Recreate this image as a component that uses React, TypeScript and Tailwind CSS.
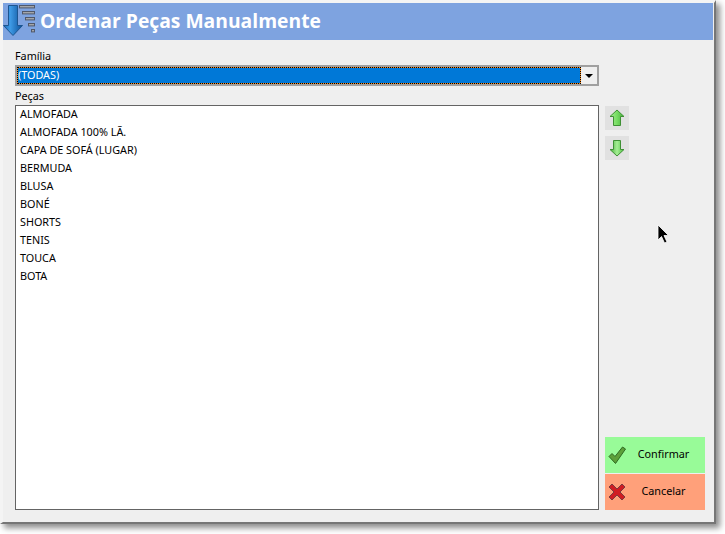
import React from "react";

const items = ["ALMOFADA", "ALMOFADA 100% LÃ.", "CAPA DE SOFÁ (LUGAR)", "BERMUDA", "BLUSA", "BONÉ", "SHORTS", "TENIS", "TOUCA", "BOTA"];

function TitleIcon() {
  return (
    <svg width="36" height="37" viewBox="0 0 36 37" className="shrink-0">
      <defs>
        <linearGradient id="tb" x1="0" x2="1" y1="0" y2="0">
          <stop offset="0" stopColor="#1766b8" />
          <stop offset="0.35" stopColor="#3f9be6" />
          <stop offset="1" stopColor="#0b4f98" />
        </linearGradient>
      </defs>
      <path d="M5.5 2.5H14.5V22.5H19.5L10 32.5 0.5 22.5H5.5Z" fill="url(#tb)" stroke="#1d5590" strokeWidth="1" />
      {[[16.5, 2.5, 15], [19.5, 8.5, 12], [22.5, 14.5, 9], [25.5, 20.5, 6], [28.5, 26.5, 3]].map(([x, y, w]) => (
        <rect key={y} x={x} y={y} width={w} height="2.4" fill="#a3a6aa" stroke="#50586a" strokeWidth="1" />
      ))}
    </svg>
  );
}

function Arrow({ down }: { down?: boolean }) {
  return (
    <svg width="16" height="18" viewBox="0 0 16 18" className={down ? "rotate-180" : ""}>
      <defs>
        <linearGradient id={down ? "ad" : "au"} x1="0" x2="1" y1="0" y2="0">
          <stop offset="0" stopColor={down ? "#4fc242" : "#a4ee90"} />
          <stop offset="0.5" stopColor={down ? "#a5ee94" : "#76dc62"} />
          <stop offset="1" stopColor="#45ae3a" />
        </linearGradient>
      </defs>
      <path d="M8 1 15 7.5H11.5V16.5H4.5V7.5H1Z" fill={`url(#${down ? "ad" : "au"})`} stroke="#3f9035" strokeWidth="1" />
    </svg>
  );
}

export default function App() {
  return (
    <div className="w-[725px] h-[534px] bg-white overflow-hidden font-['Noto_Sans',sans-serif] text-[10.8px] leading-[14px] text-black">
      <div className="w-[716px] h-[524px] bg-[#efefef] border-r-2 border-b-2 border-[#767676] border-l-[3px] border-l-[#f4f4f4] border-t-[3px] border-t-[#f4f4f4] shadow-[4px_4px_6px_rgba(0,0,0,0.45)] flex flex-col">
        <div className="h-[37px] mr-[1px] bg-[#7ea3e0] flex items-center gap-[1px] shrink-0">
          <TitleIcon />
          <span className="font-['Open_Sans',sans-serif] text-[19.3px] font-bold text-white leading-none pb-[1px]">Ordenar Peças Manualmente</span>
        </div>
        <div className="flex flex-1 pl-3 pb-[12px] gap-[6px]">
          <div className="w-[584px] flex flex-col">
            <div className="h-[25px] flex items-end pb-[2px] pt-[9px]">Família</div>
            <div className="h-[21px] flex border-2 border-[#a0a0a0] bg-white shrink-0">
              <div className="flex-1 bg-[#ff8c1a]">
                <div className="h-full bg-[#0078d7] bg-clip-padding text-white flex items-center pb-[1px] border border-dotted border-black">(TODAS)</div>
              </div>
              <div className="w-4 bg-[#efefef] flex items-center justify-center">
                <div className="w-0 h-0 border-l-[4px] border-r-[4px] border-t-[4px] border-l-transparent border-r-transparent border-t-black" />
              </div>
            </div>
            <div className="h-[19px] flex items-end pb-[2px]">Peças</div>
            <div className="flex-1 bg-white border border-[#646464] pl-1">
              {items.map((t) => (
                <div key={t} className="h-[18px] pb-[2px] flex items-center">{t}</div>
              ))}
            </div>
          </div>
          <div className="w-[100px] flex flex-col pt-[66px]">
            <button className="w-6 h-6 bg-[#e1e1e1] flex items-center justify-center"><Arrow /></button>
            <button className="w-6 h-6 mt-[6px] bg-[#e1e1e1] flex items-center justify-center"><Arrow down /></button>
            <div className="flex-1" />
            <button className="h-9 bg-[#98fb98] flex items-center relative">
              <svg width="18" height="18" viewBox="0 0 18 18" className="absolute left-[3px] top-[9px]">
                <path d="M1 10.5 4 7.5 7 10.5 14.5 1 17.5 3 7.5 17.5Z" fill="#5da03a" stroke="#2e6a22" strokeWidth="1" />
              </svg>
              <span className="w-full text-center pl-[17px] pb-[2px]">Confirmar</span>
            </button>
            <button className="h-9 mt-[1px] bg-[#ffa07a] flex items-center relative">
              <svg width="18" height="18" viewBox="0 0 18 18" className="absolute left-[3px] top-[9px]">
                <path d="M1 4 4 1 9 6 14 1 17 4 12 9 17 14 14 17 9 12 4 17 1 14 6 9Z" fill="#d01c22" stroke="#7a3a40" strokeWidth="1" />
              </svg>
              <span className="w-full text-center pl-[17px] pb-[2px]">Cancelar</span>
            </button>
          </div>
        </div>
      </div>
      <svg width="12" height="20" viewBox="0 0 12 20" className="absolute left-[657px] top-[224px]">
        <path d="M1 1V16L4.5 12.5 7.5 19 10 18 7 11.5H11.5Z" fill="#000" stroke="#fff" strokeWidth="0.8" />
      </svg>
    </div>
  );
}
